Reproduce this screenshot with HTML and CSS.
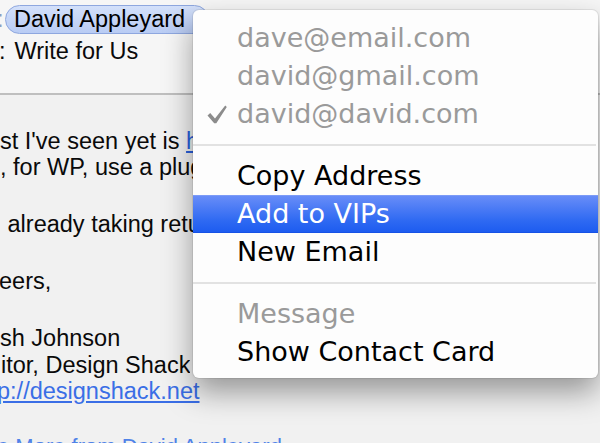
FILE: index.html
```html
<!DOCTYPE html>
<html>
<head>
<meta charset="utf-8">
<link rel="stylesheet" href="styles.css">
</head>
<body>
<div class="mail">
  <div class="header">
    <div class="row to-row"><span class="label">:</span><span class="pill">David Appleyard</span></div>
    <div class="row subj-row"><span class="colon">:</span><span class="subject">Write for Us</span></div>
  </div>
  <div class="content">
    <p class="p1"><span class="ln l1">st I've seen yet is <a class="link" href="#">http://</a></span><br><span class="ln l2">, for WP, use a plugin</span></p>
    <p class="p2"><span class="ln l3">&nbsp;already taking returns</span></p>
    <p class="p3"><span class="ln l4">eers,</span></p>
    <p class="p4"><span class="ln l5">sh Johnson</span><br><span class="ln l6">itor, Design Shack</span><br><a class="link l7" href="#">p://designshack.net</a></p>
    <p class="p5"><a class="more" href="#">e More from David Appleyard</a></p>
  </div>
</div>

<div class="menu">
  <div class="item disabled"><span class="gutter"></span>dave@email.com</div>
  <div class="item disabled"><span class="gutter"></span>david@gmail.com</div>
  <div class="item disabled"><span class="gutter"><svg class="check" width="20" height="19" viewBox="0 0 20 19"><path d="M0.5 10.5 L3.2 8 L8 13.6 L18.2 0.6 L19.8 2 L9.3 18.2 L7.2 18.2 Z" fill="#8c8c8c"/></svg></span>david@david.com</div>
  <div class="sep"></div>
  <div class="item"><span class="gutter"></span>Copy Address</div>
  <div class="item active"><span class="gutter"></span>Add to VIPs</div>
  <div class="item"><span class="gutter"></span>New Email</div>
  <div class="sep"></div>
  <div class="item disabled"><span class="gutter"></span>Message</div>
  <div class="item"><span class="gutter"></span>Show Contact Card</div>
</div>
</body>
</html>
```
FILE: styles.css
```css
html, body {
  margin: 0;
  padding: 0;
}
body {
  width: 600px;
  height: 443px;
  overflow: hidden;
  background: #f1f1f1;
  font-family: "Liberation Sans", Arial, Helvetica, sans-serif;
  font-size: 23.5px;
  color: #0a0a0a;
  position: relative;
}
.mail {
  width: 600px;
  height: 443px;
  overflow: hidden;
}
.header {
  box-sizing: border-box;
  height: 95px;
  padding-top: 5px;
  background: #f6f6f6;
  border-bottom: 2px solid #bfbfbf;
}
.row {
  white-space: nowrap;
}
.to-row {
  height: 30px;
  display: flex;
  align-items: flex-start;
}
.label {
  color: #8d9dc0;
  line-height: 26px;
  margin-left: -3px;
  margin-top: 1px;
  width: 8px;
  overflow: hidden;
}
.pill {
  display: inline-block;
  line-height: 26px;
  padding: 0 23px 1px 8px;
  border: 1px solid #8ea7df;
  border-radius: 15px;
  background: linear-gradient(#d3e0fa, #b9ccf4);
  color: #000;
}
.subj-row {
  margin-top: 3px;
  line-height: 26px;
  display: flex;
}
.colon {
  margin-left: -1px;
}
.subject {
  margin-left: 9px;
}
.content {
  padding-top: 32.5px;
  white-space: nowrap;
  line-height: 26.5px;
}
.content p {
  margin: 0 0 30.5px 0;
}
.content .p4 {
  margin-bottom: 28px;
}
.ln {
  display: inline-block;
  vertical-align: top;
  max-width: 194px;
  overflow: hidden;
}
.l3 { padding-left: 1px; }
.l4 { margin-left: -1px; }
.l6 { padding-left: 1px; }
.link {
  color: #2a5fdc;
  text-decoration: underline;
}
.l7 {
  margin-left: -3px;
  color: #3a6ee6;
}
.more {
  color: #4f82e8;
  text-decoration: none;
  font-size: 22px;
  margin-left: -3px;
}

.menu {
  position: absolute;
  left: 193px;
  top: 10px;
  width: 405px;
  height: 368px;
  box-sizing: border-box;
  padding-top: 9px;
  background: #fdfdfd;
  border-radius: 6px;
  box-shadow: 0 14px 30px rgba(0, 0, 0, 0.38), 0 0 0 1px rgba(0, 0, 0, 0.07);
  font-family: "DejaVu Sans", "Lucida Grande", Verdana, sans-serif;
  font-size: 27px;
  color: #000;
  overflow: hidden;
}
.item {
  height: 38px;
  line-height: 38px;
  display: flex;
  align-items: center;
  white-space: nowrap;
  box-sizing: border-box;
}
.gutter {
  width: 44px;
  flex: none;
  display: flex;
  align-items: center;
  padding-left: 14px;
  box-sizing: border-box;
  height: 38px;
}
.check {
  display: block;
  margin-top: 1px;
}
.item.disabled {
  color: #9a9a9a;
}
.item.active {
  color: #fff;
  background: linear-gradient(#6a8ef8, #2e69f2 70%, #1d5cf0);
  border-bottom: 1px solid #1652e6;
  box-shadow: inset 0 1px 0 #7c9bf7;
}
.sep {
  height: 24px;
  display: flex;
  align-items: center;
}
.sep::before {
  content: "";
  display: block;
  width: 403px;
  height: 2px;
  background: #e2e2e2;
}
```
